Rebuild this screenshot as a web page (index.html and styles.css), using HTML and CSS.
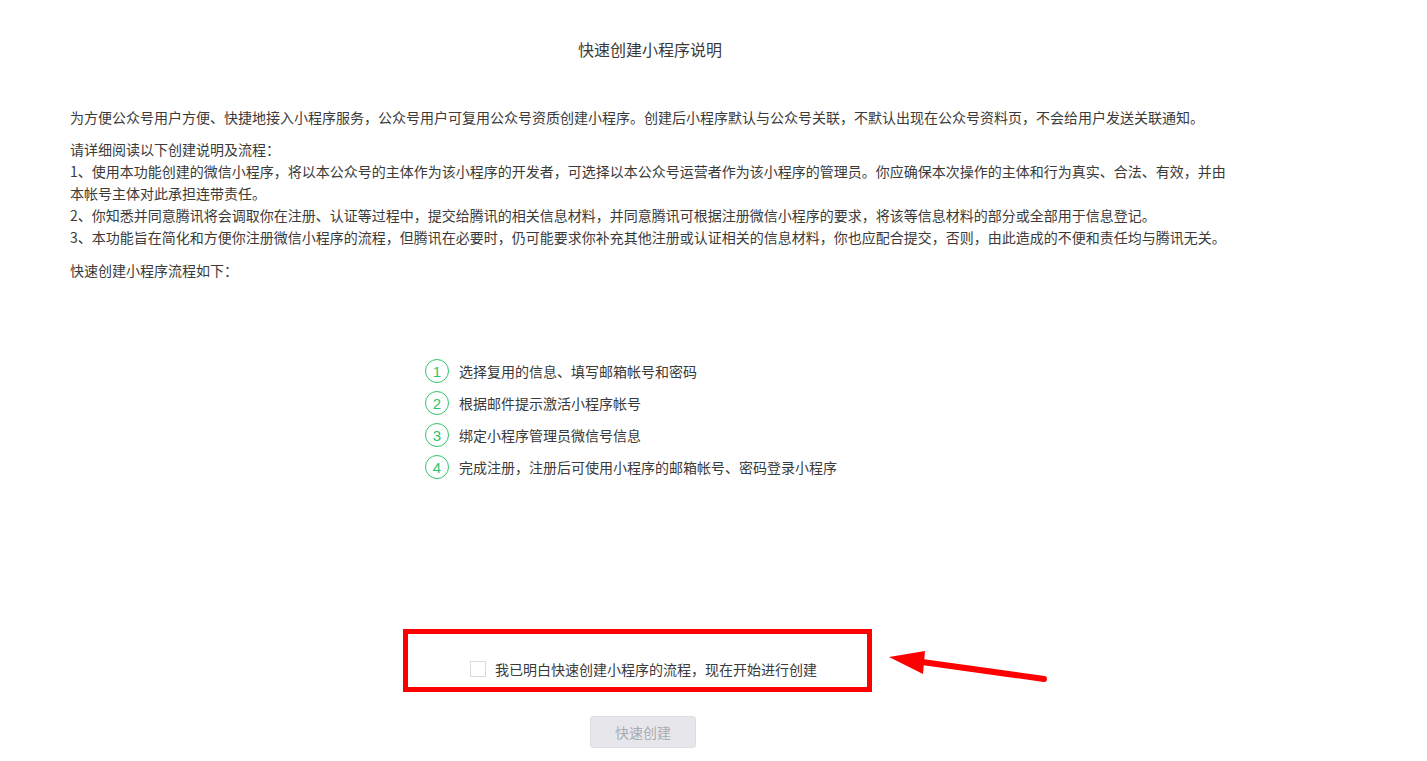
FILE: index.html
```html
<!DOCTYPE html>
<html lang="zh-CN">
<head>
    <meta charset="UTF-8">
    <title>快速创建小程序说明</title>
    <link rel="stylesheet" href="styles.css">
</head>
<body>
    <section class="page">
        <h2 class="page-title">快速创建小程序说明</h2>

        <p class="intro">为方便公众号用户方便、快捷地接入小程序服务，公众号用户可复用公众号资质创建小程序。创建后小程序默认与公众号关联，不默认出现在公众号资料页，不会给用户发送关联通知。</p>

        <div class="terms">
            <p>请详细阅读以下创建说明及流程：</p>
            <p>1、使用本功能创建的微信小程序，将以本公众号的主体作为该小程序的开发者，可选择以本公众号运营者作为该小程序的管理员。你应确保本次操作的主体和行为真实、合法、有效，并由本帐号主体对此承担连带责任。</p>
            <p>2、你知悉并同意腾讯将会调取你在注册、认证等过程中，提交给腾讯的相关信息材料，并同意腾讯可根据注册微信小程序的要求，将该等信息材料的部分或全部用于信息登记。</p>
            <p>3、本功能旨在简化和方便你注册微信小程序的流程，但腾讯在必要时，仍可能要求你补充其他注册或认证相关的信息材料，你也应配合提交，否则，由此造成的不便和责任均与腾讯无关。</p>
        </div>

        <p class="flow-title">快速创建小程序流程如下：</p>

        <ol class="steps">
            <li><span class="step-num">1</span>选择复用的信息、填写邮箱帐号和密码</li>
            <li><span class="step-num">2</span>根据邮件提示激活小程序帐号</li>
            <li><span class="step-num">3</span>绑定小程序管理员微信号信息</li>
            <li><span class="step-num">4</span>完成注册，注册后可使用小程序的邮箱帐号、密码登录小程序</li>
        </ol>

        <div class="agree">
            <label class="agree-label"><span class="checkbox"></span>我已明白快速创建小程序的流程，现在开始进行创建</label>
        </div>

        <div class="actions">
            <button class="btn-create" disabled>快速创建</button>
        </div>
    </section>

    <!-- annotation on top of the screenshot -->
    <div class="mark-box"></div>
    <svg class="mark-arrow" width="1427" height="761" viewBox="0 0 1427 761">
        <line x1="1044" y1="679" x2="915" y2="661" stroke="#ff0000" stroke-width="6" stroke-linecap="round"/>
        <polygon points="889,657 925,651 923,674" fill="#ff0000"/>
    </svg>
</body>
</html>
```

FILE: styles.css
```css
body {
    margin: 0;
    padding: 0;
    background-color: #fff;
    color: #3a3a3a;
    font-family: "Noto Sans CJK SC", "Liberation Sans", sans-serif;
    font-size: 14px;
}

.page {
    width: 1160px;
    margin-left: 70px;
    padding-top: 37px;
}

.page-title {
    margin: 0;
    text-align: center;
    font-size: 16px;
    font-weight: normal;
    line-height: 24px;
}

p {
    margin: 0;
}

.intro {
    margin-top: 45px;
    line-height: 22px;
}

.terms {
    margin-top: 10px;
    line-height: 22px;
}

.flow-title {
    margin-top: 11px;
    line-height: 22px;
}

.steps {
    list-style: none;
    margin: 74px 0 0;
    padding-left: 355px;
}

.steps li {
    display: flex;
    align-items: center;
    height: 32px;
}

.step-num {
    display: inline-flex;
    align-items: center;
    justify-content: center;
    width: 22px;
    height: 22px;
    margin-right: 10px;
    border: 1px solid #2fc46a;
    border-radius: 50%;
    color: #2fc46a;
    font-family: "Liberation Sans", sans-serif;
    font-size: 15px;
}

.agree {
    margin-top: 175px;
    padding-left: 400px;
}

.agree-label {
    display: flex;
    align-items: center;
    height: 22px;
}

.checkbox {
    width: 14px;
    height: 14px;
    margin-right: 9px;
    border: 1px solid #d9dadc;
    background-color: #fff;
}

.actions {
    margin-top: 36px;
    padding-left: 520px;
}

.btn-create {
    width: 106px;
    height: 32px;
    padding: 0;
    border: 1px solid #dedfe2;
    border-radius: 3px;
    background-color: #e7e7eb;
    color: #a9abb0;
    font-family: "Noto Sans CJK SC", sans-serif;
    font-size: 14px;
}

.mark-box {
    position: absolute;
    left: 403px;
    top: 629px;
    width: 459px;
    height: 53px;
    border: 5px solid #ff0000;
}

.mark-arrow {
    position: absolute;
    left: 0;
    top: 0;
    pointer-events: none;
}
```
